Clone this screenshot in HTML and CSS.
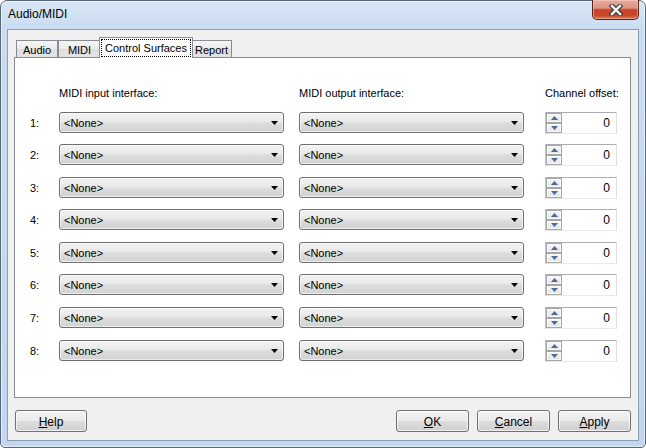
FILE: index.html
```html
<!DOCTYPE html>
<html>
<head>
<meta charset="utf-8">
<title>Audio/MIDI</title>
<link rel="stylesheet" href="styles.css">
</head>
<body>
<div class="window">
  <div class="titlebar">
    <span class="title">Audio/MIDI</span>
    <div class="close">
      <svg width="16" height="12" viewBox="0 0 16 12">
        <path d="M4 2 L12 10 M12 2 L4 10" stroke="#3c3c44" stroke-width="4.6" stroke-linecap="square" fill="none"/>
        <path d="M4 2 L12 10 M12 2 L4 10" stroke="#ffffff" stroke-width="2.4" stroke-linecap="square" fill="none"/>
      </svg>
    </div>
  </div>
  <div class="client">
    <div class="tabs">
      <div class="tab t-audio">Audio</div>
      <div class="tab t-midi">MIDI</div>
      <div class="tab sel"><span class="focus">Control Surfaces</span></div>
      <div class="tab t-report">Report</div>
    </div>
    <div class="panel">
      <div class="grid">
        <div></div>
        <div class="hdr">MIDI input interface:</div>
        <div class="hdr">MIDI output interface:</div>
        <div class="hdr">Channel offset:</div>

        <div class="num">1:</div>
        <div class="combo"><span>&lt;None&gt;</span><svg width="7" height="4" viewBox="0 0 7 4"><path d="M0 0 H7 L3.5 4 Z" fill="#000"/></svg></div>
        <div class="combo"><span>&lt;None&gt;</span><svg width="7" height="4" viewBox="0 0 7 4"><path d="M0 0 H7 L3.5 4 Z" fill="#000"/></svg></div>
        <div class="spin"><div class="spinbtns"><div class="sb"><svg width="7" height="4" viewBox="0 0 7 4"><path d="M0 4 H7 L3.5 0 Z" fill="#4d6a96"/></svg></div><div class="sb"><svg width="7" height="4" viewBox="0 0 7 4"><path d="M0 0 H7 L3.5 4 Z" fill="#4d6a96"/></svg></div></div><span class="val">0</span></div>

        <div class="num">2:</div>
        <div class="combo"><span>&lt;None&gt;</span><svg width="7" height="4" viewBox="0 0 7 4"><path d="M0 0 H7 L3.5 4 Z" fill="#000"/></svg></div>
        <div class="combo"><span>&lt;None&gt;</span><svg width="7" height="4" viewBox="0 0 7 4"><path d="M0 0 H7 L3.5 4 Z" fill="#000"/></svg></div>
        <div class="spin"><div class="spinbtns"><div class="sb"><svg width="7" height="4" viewBox="0 0 7 4"><path d="M0 4 H7 L3.5 0 Z" fill="#4d6a96"/></svg></div><div class="sb"><svg width="7" height="4" viewBox="0 0 7 4"><path d="M0 0 H7 L3.5 4 Z" fill="#4d6a96"/></svg></div></div><span class="val">0</span></div>

        <div class="num">3:</div>
        <div class="combo"><span>&lt;None&gt;</span><svg width="7" height="4" viewBox="0 0 7 4"><path d="M0 0 H7 L3.5 4 Z" fill="#000"/></svg></div>
        <div class="combo"><span>&lt;None&gt;</span><svg width="7" height="4" viewBox="0 0 7 4"><path d="M0 0 H7 L3.5 4 Z" fill="#000"/></svg></div>
        <div class="spin"><div class="spinbtns"><div class="sb"><svg width="7" height="4" viewBox="0 0 7 4"><path d="M0 4 H7 L3.5 0 Z" fill="#4d6a96"/></svg></div><div class="sb"><svg width="7" height="4" viewBox="0 0 7 4"><path d="M0 0 H7 L3.5 4 Z" fill="#4d6a96"/></svg></div></div><span class="val">0</span></div>

        <div class="num">4:</div>
        <div class="combo"><span>&lt;None&gt;</span><svg width="7" height="4" viewBox="0 0 7 4"><path d="M0 0 H7 L3.5 4 Z" fill="#000"/></svg></div>
        <div class="combo"><span>&lt;None&gt;</span><svg width="7" height="4" viewBox="0 0 7 4"><path d="M0 0 H7 L3.5 4 Z" fill="#000"/></svg></div>
        <div class="spin"><div class="spinbtns"><div class="sb"><svg width="7" height="4" viewBox="0 0 7 4"><path d="M0 4 H7 L3.5 0 Z" fill="#4d6a96"/></svg></div><div class="sb"><svg width="7" height="4" viewBox="0 0 7 4"><path d="M0 0 H7 L3.5 4 Z" fill="#4d6a96"/></svg></div></div><span class="val">0</span></div>

        <div class="num">5:</div>
        <div class="combo"><span>&lt;None&gt;</span><svg width="7" height="4" viewBox="0 0 7 4"><path d="M0 0 H7 L3.5 4 Z" fill="#000"/></svg></div>
        <div class="combo"><span>&lt;None&gt;</span><svg width="7" height="4" viewBox="0 0 7 4"><path d="M0 0 H7 L3.5 4 Z" fill="#000"/></svg></div>
        <div class="spin"><div class="spinbtns"><div class="sb"><svg width="7" height="4" viewBox="0 0 7 4"><path d="M0 4 H7 L3.5 0 Z" fill="#4d6a96"/></svg></div><div class="sb"><svg width="7" height="4" viewBox="0 0 7 4"><path d="M0 0 H7 L3.5 4 Z" fill="#4d6a96"/></svg></div></div><span class="val">0</span></div>

        <div class="num">6:</div>
        <div class="combo"><span>&lt;None&gt;</span><svg width="7" height="4" viewBox="0 0 7 4"><path d="M0 0 H7 L3.5 4 Z" fill="#000"/></svg></div>
        <div class="combo"><span>&lt;None&gt;</span><svg width="7" height="4" viewBox="0 0 7 4"><path d="M0 0 H7 L3.5 4 Z" fill="#000"/></svg></div>
        <div class="spin"><div class="spinbtns"><div class="sb"><svg width="7" height="4" viewBox="0 0 7 4"><path d="M0 4 H7 L3.5 0 Z" fill="#4d6a96"/></svg></div><div class="sb"><svg width="7" height="4" viewBox="0 0 7 4"><path d="M0 0 H7 L3.5 4 Z" fill="#4d6a96"/></svg></div></div><span class="val">0</span></div>

        <div class="num">7:</div>
        <div class="combo"><span>&lt;None&gt;</span><svg width="7" height="4" viewBox="0 0 7 4"><path d="M0 0 H7 L3.5 4 Z" fill="#000"/></svg></div>
        <div class="combo"><span>&lt;None&gt;</span><svg width="7" height="4" viewBox="0 0 7 4"><path d="M0 0 H7 L3.5 4 Z" fill="#000"/></svg></div>
        <div class="spin"><div class="spinbtns"><div class="sb"><svg width="7" height="4" viewBox="0 0 7 4"><path d="M0 4 H7 L3.5 0 Z" fill="#4d6a96"/></svg></div><div class="sb"><svg width="7" height="4" viewBox="0 0 7 4"><path d="M0 0 H7 L3.5 4 Z" fill="#4d6a96"/></svg></div></div><span class="val">0</span></div>

        <div class="num">8:</div>
        <div class="combo"><span>&lt;None&gt;</span><svg width="7" height="4" viewBox="0 0 7 4"><path d="M0 0 H7 L3.5 4 Z" fill="#000"/></svg></div>
        <div class="combo"><span>&lt;None&gt;</span><svg width="7" height="4" viewBox="0 0 7 4"><path d="M0 0 H7 L3.5 4 Z" fill="#000"/></svg></div>
        <div class="spin"><div class="spinbtns"><div class="sb"><svg width="7" height="4" viewBox="0 0 7 4"><path d="M0 4 H7 L3.5 0 Z" fill="#4d6a96"/></svg></div><div class="sb"><svg width="7" height="4" viewBox="0 0 7 4"><path d="M0 0 H7 L3.5 4 Z" fill="#4d6a96"/></svg></div></div><span class="val">0</span></div>
      </div>
    </div>
    <div class="buttons">
      <div class="btn help"><u>H</u>elp</div>
      <div class="spacer"></div>
      <div class="btn"><u>O</u>K</div>
      <div class="btn"><u>C</u>ancel</div>
      <div class="btn"><u>A</u>pply</div>
    </div>
  </div>
</div>
</body>
</html>
```

FILE: styles.css
```css
* { box-sizing: border-box; }
html, body { margin: 0; padding: 0; }
body {
  width: 646px;
  height: 448px;
  overflow: hidden;
  background: #ffffff;
  font-family: "Liberation Sans", Arial, sans-serif;
  font-size: 11px;
  color: #000;
}

.window {
  width: 646px;
  height: 448px;
  border: 1px solid #57677a;
  border-radius: 7px 7px 5px 5px;
  background: linear-gradient(#dae7f6 0px, #c9dcf2 28px, #c2d6ef 100%);
  box-shadow: inset 0 0 0 1px rgba(255,255,255,0.55);
  display: flex;
  flex-direction: column;
  padding: 0 6px 6px 6px;
}

.titlebar {
  height: 28px;
  display: flex;
  align-items: flex-start;
  flex: none;
}
.title {
  padding: 6px 0 0 1px;
  font-size: 12px;
  line-height: 14px;
  color: #000;
}
.close {
  margin-left: auto;
  margin-top: -1px;
  width: 47px;
  height: 20px;
  border: 1px solid #5a2018;
  border-top: none;
  border-radius: 0 0 5px 5px;
  background: linear-gradient(#e8ab9c 0%, #dc9483 42%, #c5432b 52%, #c9462c 80%, #df7652 100%);
  box-shadow: inset 0 0 0 1px rgba(255,220,210,0.45);
  display: flex;
  align-items: center;
  justify-content: center;
}

.client {
  flex: 1;
  border: 1px solid #8d9fb6;
  background: #f0f0f0;
  display: flex;
  flex-direction: column;
  padding: 7px 7px 8px 6px;
}

.tabs {
  display: flex;
  align-items: flex-end;
  height: 20px;
  padding-left: 2px;
  flex: none;
  position: relative;
  z-index: 1;
}
.tab {
  height: 17px;
  border: 1px solid #898c95;
  border-bottom: none;
  background: linear-gradient(#f5f5f5, #ebebeb 50%, #dedede 51%, #e3e3e3);
  display: flex;
  justify-content: center;
  align-items: center;
  padding-top: 2px;
  line-height: 13px;
}
.t-audio { width: 42px; }
.t-midi { width: 43px; }
.t-report { width: 41px; }
.tab.sel {
  width: 94px;
  height: 21px;
  margin: 0 -2px -1px -2px;
  background: #ffffff;
  padding: 1px;
  align-items: stretch;
  position: relative;
  z-index: 2;
}
.focus {
  display: flex;
  justify-content: center;
  align-items: flex-start;
  padding-top: 2px;
  width: 100%;
  height: 18px;
  border: 1px dotted #000;
}

.panel {
  flex: 1;
  border: 1px solid #898c95;
  background: #ffffff;
  padding: 29px 0 0 15px;
}

.grid {
  display: grid;
  grid-template-columns: 29px 240px 246px 72px;
  grid-auto-rows: 21px;
  grid-template-rows: 13px;
  row-gap: 11.57px;
  align-items: center;
}
.hdr {
  line-height: 13px;
  white-space: nowrap;
}
.num {
  line-height: 13px;
  padding-top: 2px;
}

.combo {
  width: 225px;
  height: 21px;
  border: 1px solid #707070;
  border-radius: 3px;
  background: linear-gradient(#f3f3f3 0%, #e9e9e9 45%, #dcdcdc 55%, #d2d2d2 100%);
  box-shadow: inset 0 0 0 1px rgba(255,255,255,0.6);
  display: flex;
  align-items: center;
  justify-content: space-between;
  padding: 0 5px 0 4px;
}
.combo span { line-height: 13px; padding-top: 2px; }
.combo svg { display: block; margin-top: 1px; }

.spin {
  width: 72px;
  height: 22px;
  align-self: start;
  border: 1px solid;
  border-color: #abadb3 #dbdfe6 #e3e9ef #bfc3ca;
  background: #ffffff;
  display: flex;
  align-items: center;
}
.spinbtns {
  width: 16px;
  height: 20px;
  display: flex;
  flex-direction: column;
}
.sb {
  flex: 1;
  border: 1px solid #a6a6a6;
  background: linear-gradient(#f6f6f6, #e4e4e4);
  box-shadow: inset 0 0 0 1px rgba(255,255,255,0.7);
  display: flex;
  align-items: center;
  justify-content: center;
}
.sb svg { display: block; }
.val {
  flex: 1;
  text-align: right;
  padding-right: 6px;
  font-size: 12px;
  line-height: 14px;
}

.buttons {
  display: flex;
  gap: 8px;
  margin-top: 12px;
  height: 22px;
  flex: none;
}
.spacer { flex: 1; }
.btn {
  width: 73px;
  height: 22px;
  border: 1px solid #707070;
  border-radius: 3px;
  background: linear-gradient(#f2f2f2 0%, #ebebeb 48%, #dddddd 52%, #cfcfcf 100%);
  box-shadow: inset 0 0 0 1px rgba(255,255,255,0.65);
  display: flex;
  align-items: center;
  justify-content: center;
  font-size: 12px;
  line-height: 14px;
  padding-top: 1px;
}
.btn.help { margin-left: 1px; width: 72px; }
.btn u { text-decoration: underline; text-underline-offset: 1px; }
```
